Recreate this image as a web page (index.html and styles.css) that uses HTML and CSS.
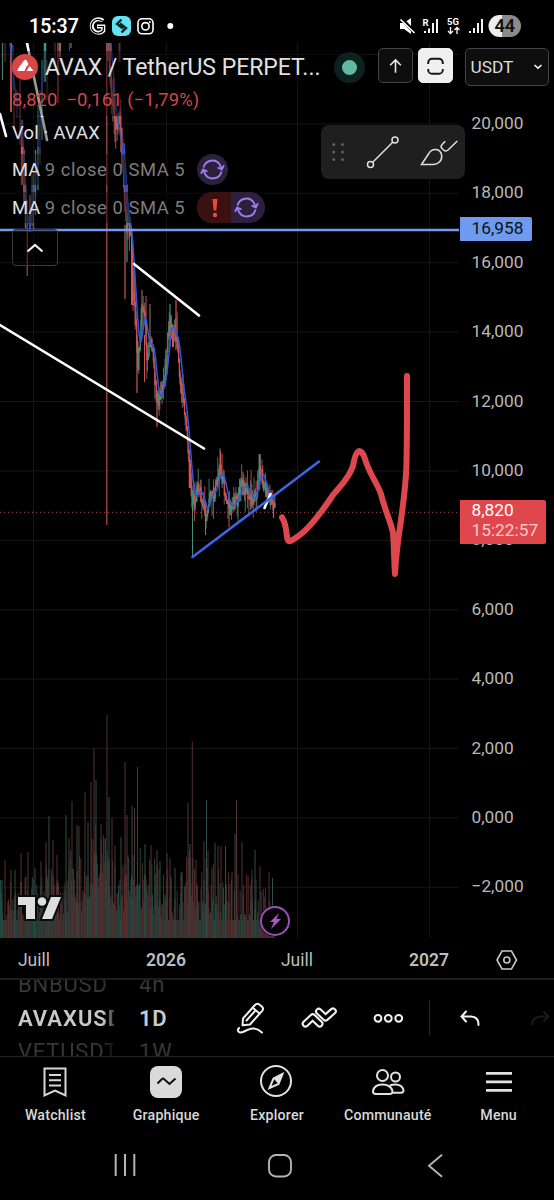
FILE: index.html
```html
<!DOCTYPE html>
<html lang="fr">
<head>
<meta charset="utf-8">
<title>AVAX / TetherUS</title>
<link rel="stylesheet" href="styles.css">
</head>
<body>
<div class="phone">
  <header class="status">
    <span class="clock">15:37</span>
    <svg class="status-left" width="88" height="20" viewBox="88 16 88 20" fill="none">
      <path d="M103 20.800A6.800 6.800 0 1 0 103.300 30.800V26.500H97" stroke="#fff" stroke-width="4"/>
      <path d="M102.600 21.200A6.800 6.800 0 1 0 103.300 30.500V26.500H97.700" stroke="#000" stroke-width="1.200"/>
      <rect x="112" y="16" width="19" height="20" rx="6" fill="#62e3f2"/>
      <path d="M121.500 19.500l-4.500 4.300 6 4.700M121.500 32.500l4.500-4.300-6-4.700" stroke="#07272b" stroke-width="2.400"/>
      <rect x="138" y="18.800" width="15" height="15" rx="4" stroke="#fff" stroke-width="1.600"/>
      <circle cx="145.500" cy="26.300" r="3.700" stroke="#fff" stroke-width="1.600"/><circle cx="149.800" cy="22" r="1" fill="#fff"/>
      <circle cx="170.300" cy="26" r="3" fill="#fff"/>
    </svg>
    <svg class="status-right" width="122" height="22" viewBox="399 15 122 22" fill="none" stroke="#fff">
      <path d="M400 23h4l7-5v16l-7-5h-4z" fill="#fff" stroke="none"/>
      <path d="M401 18l14 15" stroke="#000" stroke-width="3.500"/><path d="M400.500 19.500l14 13.500" stroke-width="1.600"/>
      <path d="M425 31v2M429 28.500V33M433 23v10M437 19v14M470 31v2M474 28v5M478 23v10M482 19v14" stroke-width="1.900"/>
      <text class="tiny" x="422.500" y="25.500">R</text><text class="tiny" x="447" y="25">5G</text>
      <path d="M450.500 27v6M448 31l2.500 2.500 2.500-2.500M457 34v-6M454.500 30l2.500-2.500 2.500 2.500" stroke-width="1.300"/>
      <path d="M499.500 15H502v22h-2.500a11 11 0 0 1 0-22z" fill="#eee" stroke="none"/>
      <path d="M502 15h8a11 11 0 0 1 0 22h-8z" fill="#8b8b8b" stroke="none"/>
      <text class="battery" x="494.500" y="32.300">44</text>
    </svg>
  </header>

  <main class="market">
    <section class="chart">
      <svg class="plot" width="459" height="895" viewBox="0 43 459 895" fill="none">
        <g id="grid" stroke="#151616"></g>
        <g id="volume"></g>
        <g id="candles"></g>
        <path id="average" stroke="#3158d8" stroke-width="1.500"/>
        <path d="M10 43l3 30 5 35M22 120L27 210l3 20 6-55 4-50 4-67M111 43l3 40 3 30 3 20 3 20 3 50 4 20" stroke="#2b4dbb" stroke-width="1.200"/>
        <path d="M0 512.300h459" stroke="#ae5053" stroke-dasharray="1 3"/>
        <path d="M0 230h459" stroke="#769bee" stroke-width="2.400"/>
        <g stroke="#fff" stroke-width="2.600" stroke-linecap="round">
          <path d="M0 325L204 448.500M134 264l65 51.500M264.500 508l6-14M0 114l6 22M27 43l20 97"/>
        </g>
        <path d="M192.500 557L319 461.500" stroke="#3c65e7" stroke-width="2.600" stroke-linecap="round"/>
        <path d="M282 517.500C286 523 286 530 287 537 288 544 291 541 297 537 308 530 323 510 333 495 340 486 348 480 353 466 356 448 361 447 365 459 369 473 377 483 381 494 385 511 391 522 393 533 394 545 394 560 395 574 396 555 397 546 401 520 407 475 407 480 407 376" stroke="#dd484e" stroke-width="6" stroke-linecap="round" stroke-linejoin="round"/>
      </svg>

      <div class="legend">
        <div class="title-row">
          <svg width="28" height="28" viewBox="0 0 28 28"><circle cx="14" cy="14" r="13" fill="#d84747"/><path d="M14.500 6.800q1.200 0 3 4.400-3.500 3-4 6.800H6.500q-1-.7 6.500-10.500.8-.8 1.500-.7zM18.500 13l4 5h-7z" fill="#fff"/></svg>
          <span class="name">AVAX / TetherUS PERPET...</span>
          <span class="live"></span>
        </div>
        <div class="change"><span>8,820</span><span>−0,161 (−1,79%)</span></div>
        <div class="study vol">Vol · AVAX</div>
        <div class="study"><span>MA <i>9 close 0 SMA 5</i></span><span class="pill"><svg width="31" height="31" viewBox="0 0 31 31"><use href="#sync" width="31" height="31"/></svg></span></div>
        <div class="study"><span>MA <i>9 close 0 SMA 5</i></span><span class="pill"><svg class="alert" width="34" height="31" viewBox="0 0 34 31"><path d="M15.500 7h5l-1.200 11.500h-2.600z" fill="#e84b3e"/><circle cx="18" cy="23" r="2.200" fill="#e84b3e"/></svg><svg width="34" height="31" viewBox="0 0 34 31"><use href="#sync" width="31" height="31"/></svg></span></div>
        <div class="collapse"><svg width="20" height="12" viewBox="0 0 20 12" fill="none"><path d="M2.500 9.500L10 3l7.500 6.500" stroke="#f0f0f0" stroke-width="2.200"/></svg></div>
      </div>

      <div class="draw-tools">
        <svg width="144" height="54" viewBox="0 0 144 54" fill="none" stroke="#e0e0e0" stroke-width="1.500">
          <g fill="#606060" stroke="none"><circle cx="12.700" cy="19.500" r="1.500"/><circle cx="21.500" cy="19.500" r="1.500"/><circle cx="12.700" cy="27" r="1.500"/><circle cx="21.500" cy="27" r="1.500"/><circle cx="12.700" cy="34.500" r="1.500"/><circle cx="21.500" cy="34.500" r="1.500"/></g>
          <circle cx="49.500" cy="39.500" r="3"/><circle cx="74" cy="15" r="3"/><path d="M51.700 37.300l20-20"/>
          <path d="M100.500 39.500L107.500 29C111 22.500 119.500 23 120.700 30.500c.5 5.500-3.700 9-8.700 9zM124.300 16.200l-3 3q-2.300 2.300-.3 4.300l1.500 1.500q2.300 2 4.800-.2l9-8.800"/>
        </svg>
      </div>

      <svg class="brand" width="48" height="32" viewBox="0 0 48 32" stroke="#0b0b0b" stroke-width="4" paint-order="stroke" fill="#dedede"><path d="M3 5h17v22H11V13H3z"/><path d="M36 5h10l-9 22H27z"/><circle cx="27" cy="9.500" r="4.300"/></svg>
      <svg class="event" width="32" height="32" viewBox="0 0 32 32"><circle cx="16" cy="16" r="15.500" fill="#060408"/><circle cx="16" cy="16" r="14" fill="none" stroke="#9852b2" stroke-width="2"/><path d="M20 8l-9 9h4l-3 7 10-10h-4.500z" fill="#a95ac6"/></svg>
    </section>

    <aside class="axis">
      <ol class="prices">
        <li>20,000</li><li>18,000</li><li>16,000</li><li>14,000</li><li>12,000</li><li>10,000</li><li>8,000</li><li>6,000</li><li>4,000</li><li>2,000</li><li>0,000</li><li>−2,000</li>
      </ol>
      <div class="tag level">16,958</div>
      <div class="tag last"><span>8,820</span><span class="countdown">15:22:57</span></div>
    </aside>

    <div class="actions">
      <button class="square"><svg width="34" height="34" viewBox="0 0 34 34" fill="none" stroke="#eee" stroke-width="1.600"><path d="M17 24V11M11.500 16.200L17 10.700l5.500 5.500"/></svg></button>
      <button class="square lit"><svg width="34" height="34" viewBox="0 0 34 34" fill="none" stroke="#151515" stroke-width="2"><path d="M9.500 15v-1.500a4 4 0 0 1 4-4h7a4 4 0 0 1 4 4V15M9.500 20v1a4 4 0 0 0 4 4h7a4 4 0 0 0 4-4v-1"/></svg></button>
      <button class="currency">USDT<svg width="10" height="8" viewBox="0 0 10 8" fill="none"><path d="M1.500 2L5 5.200 8.500 2" stroke="#f2f2f2" stroke-width="1.600"/></svg></button>
    </div>
  </main>

  <div class="timeline">
    <span>Juill</span><b>2026</b><span>Juill</span><b>2027</b>
    <svg width="24" height="22" viewBox="0 0 24 22" fill="none" stroke="#c9c9c9" stroke-width="1.600"><path d="M7 2h9.500l5 9-5 9H7l-5-9z"/><circle cx="11.800" cy="11" r="3"/></svg>
  </div>

  <div class="toolbar">
    <div class="wheel symbols"><span>BNBUSD</span><b>AVAXUSD</b><span>VETUSDT</span></div>
    <div class="wheel ranges"><span>4h</span><b>1D</b><span>1W</span></div>
    <svg class="tools" width="324" height="60" viewBox="230 988 324 60" fill="none" stroke="#f1f1f1" stroke-width="2" stroke-linejoin="round" stroke-linecap="round">
      <path d="M243 1018.500l12-13.500q2-2.200 4.300-.5l2.500 2.100q2.300 1.900.4 4.200L250 1024.500l-7.500.7zM252.500 1007.500l7 6M246.500 1020.500l8.500-9.500"/>
      <path d="M239 1028c-2.500 3 0 6 5 3.500 6-3 11-5.500 18 1"/>
      <path d="M305.500 1023.800l7.200-6.800 7 6.800" stroke-width="7.600"/><path d="M305.500 1023.800l7.200-6.800 7 6.800" stroke="#000" stroke-width="3.400"/>
      <path d="M318.800 1011.500l6.700 6.300 7.500-6.600" stroke-width="7.600"/><path d="M318.800 1011.500l6.700 6.300 7.500-6.600" stroke="#000" stroke-width="3.400"/>
      <circle cx="378" cy="1018.300" r="3.400"/><circle cx="388.300" cy="1018.300" r="3.400"/><circle cx="398.700" cy="1018.300" r="3.400"/>
      <path d="M429.500 1001v34" stroke="#2a2a2a" stroke-width="1"/>
      <path d="M466 1011.500l-4.500 5 4.500 5M462 1016.500h9q7.500 0 7.500 8.500" stroke-linejoin="miter"/>
      <path d="M544 1012l4.500 4.500-4.500 4.500M548 1016.500h-6q-10 0-10 8" stroke="#1a1a1a" stroke-linejoin="miter"/>
    </svg>
  </div>

  <nav class="tabs">
    <a><svg width="34" height="34" viewBox="0 0 34 34" fill="none" stroke="#d8d8d8" stroke-width="2"><path d="M6.500 3.500h21v27L17 25.500 6.500 30.500zM11 10h12M11 15.300h12M11 20.500h12"/></svg>Watchlist</a>
    <a><svg width="34" height="34" viewBox="0 0 34 34"><rect x="1" y="1" width="32" height="32" rx="8" fill="#dadada"/><path d="M8.500 18.500l4.500-4.500q1-.9 2 0l5.500 5 6-5.500" fill="none" stroke="#101010" stroke-width="2"/></svg>Graphique</a>
    <a><svg width="34" height="34" viewBox="0 0 34 34"><circle cx="16" cy="16" r="15" fill="none" stroke="#e2e2e2" stroke-width="2"/><path d="M22.500 9l-9 4.500L9.500 23l9-4z" fill="none" stroke="#e2e2e2" stroke-width="2"/><path d="M22.500 9l-9 4.500 5 5.500z" fill="#e2e2e2"/></svg>Explorer</a>
    <a><svg width="34" height="34" viewBox="0 0 34 34" fill="none" stroke="#e2e2e2" stroke-width="2"><circle cx="11.500" cy="10.500" r="5.500"/><circle cx="24.500" cy="12" r="4.500"/><path d="M5 29q-3.300 0-3-3C3 21 6.500 19.500 11.500 19.500S20 21 21.500 26q.3 3-3 3zM19 20.500q2.500-1 5.500-1 6.500 0 8 5.500.2 2.700-2.500 2.700h-8.500"/></svg>Communauté</a>
    <a><svg width="34" height="34" viewBox="0 0 34 34" stroke="#e2e2e2" stroke-width="2.800"><path d="M4 8.300h26M4 16.800h26M4 25.300h26"/></svg>Menu</a>
  </nav>

  <footer class="system">
    <svg width="22" height="22" viewBox="0 0 22 22" stroke="#b5b5b5" stroke-width="2"><path d="M1.700 0v22M11 0v22M20.300 0v22"/></svg>
    <svg width="24" height="24" viewBox="0 0 24 24" fill="none" stroke="#b5b5b5" stroke-width="1.900"><rect x="1" y="0" width="22" height="21.500" rx="7" transform="translate(0 1)"/></svg>
    <svg width="16" height="24" viewBox="0 0 16 24" fill="none" stroke="#b5b5b5" stroke-width="1.900"><path d="M15 .8L2 11.800l13 11"/></svg>
  </footer>
</div>
<svg width="0" height="0" class="defs"><symbol id="sync" viewBox="0 0 31 31"><path d="M6.500 13.500A9 9 0 0 1 23 11l1.500 4M24.500 17.500A9 9 0 0 1 8 20l-1.500-4M20.500 13.500l4.300 2 2.200-4.200M10.500 17.500l-4.300-2L4 19.700" fill="none" stroke="#a27bea" stroke-width="1.900"/></symbol></svg>
<script src="chart.js"></script>
</body>
</html>
```
FILE: styles.css
```css
* { box-sizing: border-box; }
body { margin: 0; background: #000; color: #e0e0e0; font-family: Roboto, "Liberation Sans", sans-serif; }
.phone { width: 554px; height: 1200px; display: flex; flex-direction: column; overflow: hidden; background: #000; }
.defs { position: absolute; }

.status { height: 43px; flex: none; display: flex; align-items: flex-start; padding: 15px 33px 0 29px; color: #fff; }
.clock { width: 59px; font-size: 19.500px; font-weight: 600; line-height: 23px; }
.status-left { margin-top: 1px; }
.status-right { margin-left: auto; }
.tiny { font: 700 9.500px Roboto, sans-serif; fill: #fff; stroke: none; }
.battery { font: 600 18px Roboto, sans-serif; fill: #101010; stroke: none; }

.market { position: relative; height: 895px; flex: none; display: flex; }
.chart { position: relative; width: 459px; }
.plot { display: block; }
.legend { position: absolute; left: 12px; top: 8px; width: 360px; }
.title-row { display: flex; align-items: center; height: 32px; }
.title-row, .change, .study { background: rgba(0, 0, 0, .4); width: fit-content; }
.title-row svg { margin-left: -1px; }
.name { margin-left: 6px; width: 275px; font-size: 23px; white-space: nowrap; letter-spacing: -.02px; }
.live { width: 31px; height: 31px; margin-left: 14px; border-radius: 50%; border: 8px solid #0d211e; background: #63b8a3; }
.change { display: flex; gap: 9px; height: 33px; align-items: center; color: #cf474c; font-size: 18.400px; letter-spacing: .1px; }
.study { display: flex; height: 31px; margin-bottom: 6.500px; align-items: center; font-size: 18.400px; }
.study i { font-style: normal; color: #7c7c7c; letter-spacing: .55px; }
.vol { height: 30px; margin: 1px 0 7px; letter-spacing: .2px; }
.pill { display: flex; margin-left: 12px; height: 31px; border-radius: 16px; overflow: hidden; background: #2b213d; }
.alert { background: #3b1010; }
.collapse { width: 46px; height: 37px; margin-top: 4px; border: 1px solid #393939; border-radius: 4px; display: flex; align-items: center; justify-content: center; background: rgba(0, 0, 0, .4); }
.draw-tools { position: absolute; left: 321px; top: 82px; width: 144px; height: 54px; border-radius: 8px; background: #1f1f1f; z-index: 2; }
.draw-tools svg { display: block; }
.brand { position: absolute; left: 15px; top: 849px; }
.event { position: absolute; left: 259px; top: 862px; }

.axis { position: relative; width: 95px; font-size: 17.300px; color: #b8b8b8; }
.prices { list-style: none; margin: 0; padding: 46px 0 0 12.500px; }
.prices li { height: 69.400px; line-height: 69px; }
.tag { position: absolute; left: 1px; padding-left: 11.500px; color: #fff; border-radius: 0 2px 2px 0; }
.level { top: 174px; width: 72px; height: 24px; line-height: 22px; background: #6e9bf0; color: #101010; }
.last { top: 457px; width: 86px; height: 44px; line-height: 20px; background: #df474c; display: flex; flex-direction: column; white-space: nowrap; }
.countdown { color: #f5caca; }

.actions { position: absolute; right: 5.500px; top: 5px; display: flex; z-index: 3; }
.actions button { font: inherit; color: #ddd; background: #0e0e0e; border: 1px solid #444; border-radius: 5px; padding: 0; height: 35px; }
.actions .square { width: 35px; margin-right: 5px; display: flex; align-items: center; justify-content: center; }
.actions .lit { background: #f0f0f0; border-color: #f0f0f0; margin-right: 12px; }
.actions .currency { width: 84px; height: 38px; display: flex; justify-content: space-between; align-items: center; padding: 0 5px 1px; font-size: 17.300px; }

.timeline { height: 42px; flex: none; display: grid; grid-template-columns: 68px 196px 66px 198px 1fr; align-items: center; justify-items: center; font-size: 17.500px; color: #bdbdbd; border-bottom: 2px solid #1d1d1d; position: relative; padding-top: 3px; }
.timeline b { font-weight: 600; }
.timeline svg { margin-left: -68px; }

.toolbar { height: 77px; flex: none; display: flex; border-bottom: 1px solid #242424; overflow: hidden; }
.wheel { height: 76px; overflow: hidden; display: flex; flex-direction: column; justify-content: center; font-size: 22px; line-height: 34px; white-space: nowrap; }
.wheel span { color: #373737; flex: none; }
.wheel b { color: #c9c9c9; font-weight: 600; flex: none; line-height: 33px; }
.symbols { width: 96px; margin-left: 18px; letter-spacing: .8px; -webkit-mask-image: linear-gradient(90deg, #000 88%, rgba(0, 0, 0, .3)); mask-image: linear-gradient(90deg, #000 88%, rgba(0, 0, 0, .3)); }
.symbols b { letter-spacing: 1px; }
.ranges { width: 91px; margin-left: 25px; letter-spacing: .8px; }
.tools { margin-top: 8px; flex: none; }

.tabs { height: 74px; flex: none; display: grid; grid-template-columns: repeat(5, 110.800px); padding-top: 8px; }
.tabs a { display: flex; flex-direction: column; align-items: center; gap: 6px; font-size: 14.200px; font-weight: 500; line-height: 20px; color: #d8d8d8; letter-spacing: .2px; }
.tabs svg { display: block; }
.system { height: 69px; display: grid; grid-template-columns: 154px 156px 1fr; align-items: start; justify-items: end; padding: 22.500px 111px 0 0; margin-left: -18px; }
```
FILE: chart.js
```
const NS = "http://www.w3.org/2000/svg";
const STEP = 0.724;
let seed = 7;
function rand() {
  seed = (seed * 16807) % 2147483647;
  return seed / 2147483647;
}
function line(parent, x, y1, y2, color, width) {
  const el = document.createElementNS(NS, "path");
  el.setAttribute("d", `M${x.toFixed(2)} ${y1.toFixed(1)}V${y2.toFixed(1)}`);
  el.setAttribute("stroke", color);
  el.setAttribute("stroke-width", width);
  parent.appendChild(el);
}
function at(points, x) {
  for (let i = 1; i < points.length; i++) {
    const [x0, y0] = points[i - 1], [x1, y1] = points[i];
    if (x <= x1) return y0 + (y1 - y0) * (x - x0) / (x1 - x0);
  }
  return points[points.length - 1][1];
}

const grid = document.getElementById("grid");
let lines = "";
for (const x of [33.5, 166.5, 297.5, 429.5]) lines += `M${x} 43V938`;
for (let i = 0; i < 13; i++) lines += `M0 ${(54.5 + i * 69.4).toFixed(1)}H459`;
const gridPath = document.createElementNS(NS, "path");
gridPath.setAttribute("d", lines);
grid.appendChild(gridPath);

// Volume bars: typical height per date, plus the exceptional sessions.
const volume = document.getElementById("volume");
const typical = [[0, 880], [30, 876], [45, 862], [60, 874], [72, 840], [85, 856], [95, 822], [107, 840], [120, 864], [134, 834], [145, 856], [155, 856], [166, 866], [180, 878], [190, 845], [197, 874], [205, 856], [220, 870], [236, 868], [245, 872], [262, 882], [272, 888], [275, 900]];
for (let x = 0.5; x < 275; x += STEP) {
  const top = at(typical, x);
  const y = Math.min(920, top + rand() * 62);
  const colors = rand() > 0.47 ? ["#1f5048", "#2a4a43", "#31413e"] : ["#6a2f31", "#5c2c2d", "#523632"];
  line(volume, x, y, 938, colors[Math.floor(rand() * 3)], 0.9);
}
const spikes = [[2, 880], [5, 860], [11, 870], [15, 870], [21, 853], [28, 852], [35, 868], [41, 861], [46, 842], [49, 816], [53, 840], [57, 855], [66, 815], [69, 838], [72, 801], [77, 825], [79, 826], [85, 792], [88, 822], [91, 782], [94, 748], [96, 780], [101, 824], [107, 715], [109, 797], [112, 818], [115, 845], [121, 837], [125, 762], [127, 815], [132, 806], [134.5, 808], [137.5, 767], [145, 844], [151, 845], [157, 850], [160, 861], [167, 853], [170, 858], [175, 868], [181, 872], [188, 803], [190, 844], [192.3, 742], [196, 860], [206.5, 800], [204, 841], [208, 851], [215, 843], [218, 846], [221, 846], [225.5, 846], [232, 872], [236.5, 800], [235, 834], [242, 842], [252, 870], [255, 850], [260, 866], [269, 872], [272.5, 878]];
spikes.forEach(([x, y], i) => line(volume, x, y, 938, i % 3 ? "#523331" : "#2f4e49", 1));

// Price candles around the closing path.
const candles = document.getElementById("candles");
const close = [[107, 42], [109, 55], [112, 95], [116, 125], [120, 112], [123, 165], [126, 225], [128, 215], [131, 240], [133, 290], [136, 325], [138, 362], [140, 340], [142, 305], [145, 320], [147, 355], [149, 345], [151, 335], [154, 365], [157, 402], [160, 395], [163, 382], [166, 368], [168, 335], [170, 312], [172, 335], [175, 332], [178, 345], [180, 378], [183, 400], [186, 415], [188, 450], [190, 478], [193, 498], [195, 498], [199, 487], [203, 502], [206, 515], [210, 492], [214, 494], [218, 476], [220, 468], [224, 485], [229, 508], [233, 505], [237, 498], [242, 485], [247, 488], [252, 502], [256, 492], [259, 470], [262, 474], [266, 492], [270, 496], [275, 511]];
const RED = "#cf5557", TEAL = "#458f7b", GREY = "#806860";
let prev = 42;
for (let x = 107; x < 275.5; x += STEP) {
  const c = at(close, x) + (rand() - 0.5) * 14;
  const wick = x < 135 ? 24 : 16;
  const color = c > prev ? RED : TEAL;
  const hi = Math.max(43, Math.min(c, prev) - rand() * rand() * wick * 1.6);
  const lo = Math.max(45, Math.max(c, prev) + rand() * rand() * wick * 1.6);
  line(candles, x, hi, lo, rand() > 0.7 ? GREY : color, 0.85);
  line(candles, x, Math.min(c, prev), Math.max(c, prev) + 3, color, 1.15);
  prev = c;
}
const wicks = [[106.8, 43, 525, "#b94e50", 1.2], [109, 43, 61, "#8b4a52", 5], [119.5, 43, 62, "#4f3438", 2], [125, 225, 299, RED, 1.2], [127, 220, 262, TEAL, 1.2], [132, 235, 305, RED, 2], [137, 335, 393, RED, 1.2], [142, 290, 330, GREY, 1.2], [146, 296, 335, RED, 1], [150, 304, 340, GREY, 1.2], [144.500, 335, 382, RED, 1], [157, 390, 427, RED, 1.200], [170, 304, 340, TEAL, 1.200], [176, 300, 350, RED, 1.2], [173, 325, 347, RED, 2], [192.500, 490, 556, TEAL, 1], [190, 460, 488, RED, 2.5], [220.5, 452, 470, RED, 1.2], [259.5, 454, 480, TEAL, 1.2], [205.5, 510, 535, RED, 1], [229, 510, 527, RED, 1], [243, 472, 495, RED, 1], [273.500, 502, 518, RED, 1.2],
  [2.500, 43, 80, "#54776f", 1.200], [5, 43, 62, "#6a3434", 1], [11, 43, 112, RED, 1.800], [14, 70, 128, "#7a3a3c", 1.3], [13, 45, 90, "#335da5", 1], [17, 90, 118, "#315c91", 1], [20, 75, 145, "#783c3d", 1.4], [22, 120, 185, RED, 2.4], [24, 150, 205, "#9d4345", 2], [25.5, 180, 228, "#447d70", 1.4], [27.2, 200, 276, "#a44648", 1.200], [30, 195, 232, "#a77575", 1.4], [32, 175, 226, "#4d8072", 1], [33.5, 170, 229, "#8c5052", 1.400], [35.500, 150, 215, TEAL, 1.3], [38, 105, 190, "#335d52", 1.800], [40, 90, 165, "#633f3d", 1.3], [42, 60, 140, "#356e64", 1.8], [45, 43, 82, "#4a918e", 2.500], [47, 60, 100, "#733b3b", 1.2], [55, 43, 65, "#6c3537", 1], [58, 43, 103, "#913a3c", 1.700], [60, 43, 57, "#8a6664", 2], [69.500, 43, 51, "#31504c", 1], [71, 43, 48, "#40635e", 1.500]];
for (const w of wicks) line(candles, w[0], w[1], w[2], w[3], w[4]);

// Moving average trails the closes.
let avg = "";
for (let x = 124; x < 275; x += 1.5) {
  let sum = 0;
  for (let k = 0; k < 7; k++) sum += at(close, x - k * 0.8);
  avg += (avg ? "L" : "M") + x + " " + (sum / 7).toFixed(1);
}
document.getElementById("average").setAttribute("d", avg);
```
